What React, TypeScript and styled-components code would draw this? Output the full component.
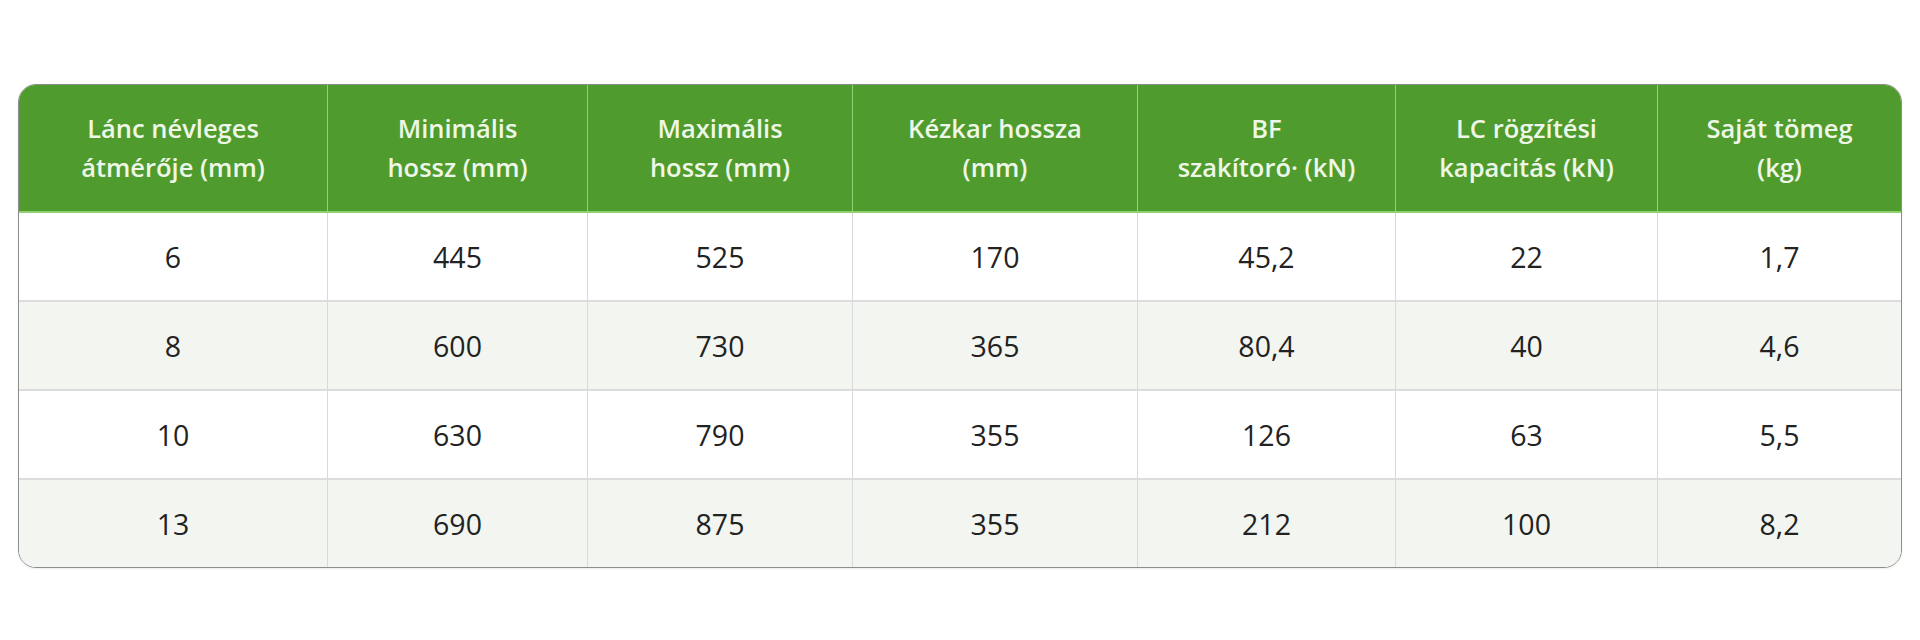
import * as React from "react";
import styled, { createGlobalStyle } from "styled-components";

const GlobalStyle = createGlobalStyle`
  html, body {
    margin: 0;
    padding: 0;
    background: #ffffff;
  }
  body {
    font-family: "Open Sans", "Noto Sans", "DejaVu Sans", sans-serif;
  }
`;

const Page = styled.div`
  width: 1920px;
  height: 640px;
  padding: 84px 18px 0;
  box-sizing: border-box;
`;

const Frame = styled.div`
  border: 1.5px solid #8e8e8e;
  border-radius: 18px;
  overflow: hidden;
  box-shadow: 0 1px 2px rgba(0, 0, 0, 0.08);
`;

const Table = styled.table`
  width: 100%;
  table-layout: fixed;
  border-collapse: separate;
  border-spacing: 0;
`;

const HeadCell = styled.th`
  height: 126px;
  padding: 0 10px;
  background: #509b2d;
  color: #eef7e7;
  font-size: 25.5px;
  font-weight: 600;
  line-height: 39px;
  text-align: center;
  vertical-align: middle;
  border-bottom: 2px solid #8fcf70;
  border-right: 1.5px solid #94d277;
  &:last-child {
    border-right: none;
  }
`;

const Row = styled.tr<{ $shaded: boolean }>`
  background: ${(p) => (p.$shaded ? "#f2f5f0" : "#ffffff")};
`;

const Cell = styled.td<{ $last: boolean }>`
  height: 87px;
  padding: 0;
  color: #222222;
  font-size: 28.5px;
  font-weight: 400;
  text-align: center;
  vertical-align: middle;
  border-right: 1.5px solid #d9d9d9;
  border-bottom: ${(p) => (p.$last ? "none" : "2px solid #dcdcdc")};
  &:last-child {
    border-right: none;
  }
`;

const widths = [309, 260, 265, 285, 258, 262];

const headers = [
  ["Lánc névleges", "átmérője (mm)"],
  ["Minimális", "hossz (mm)"],
  ["Maximális", "hossz (mm)"],
  ["Kézkar hossza", "(mm)"],
  ["BF", "szakítoró· (kN)"],
  ["LC rögzítési", "kapacitás (kN)"],
  ["Saját tömeg", "(kg)"],
];

const rows = [
  ["6", "445", "525", "170", "45,2", "22", "1,7"],
  ["8", "600", "730", "365", "80,4", "40", "4,6"],
  ["10", "630", "790", "355", "126", "63", "5,5"],
  ["13", "690", "875", "355", "212", "100", "8,2"],
];

const App = () => {
  return (
    <>
      <GlobalStyle />
      <Page>
        <Frame>
          <Table>
            <colgroup>
              {widths.map((w, i) => (
                <col key={i} style={{ width: w }} />
              ))}
              <col />
            </colgroup>
            <thead>
              <tr>
                {headers.map(([a, b]) => (
                  <HeadCell key={a}>
                    {a}
                    <br />
                    {b}
                  </HeadCell>
                ))}
              </tr>
            </thead>
            <tbody>
              {rows.map((r, i) => (
                <Row key={i} $shaded={i % 2 === 1}>
                  {r.map((v, j) => (
                    <Cell key={j} $last={i === rows.length - 1}>
                      {v}
                    </Cell>
                  ))}
                </Row>
              ))}
            </tbody>
          </Table>
        </Frame>
      </Page>
    </>
  );
};

export default App;
